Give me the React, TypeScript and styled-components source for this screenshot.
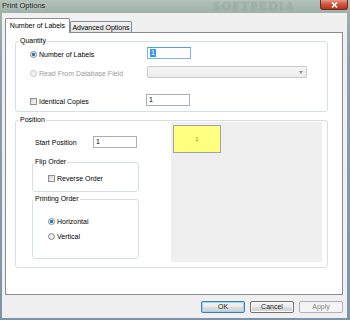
import React from "react"
import styled, { createGlobalStyle } from "styled-components"

const GlobalStyle = createGlobalStyle`
    html, body {
        margin: 0;
        padding: 0;
    }
    body {
        font-family: "Liberation Sans", Arial, sans-serif;
        font-size: 7px;
        color: #000;
    }
    * {
        box-sizing: border-box;
    }
`

export default function App() {
    return (
        <>
            <GlobalStyle />
            <Window>
                <TitleBar>
                    <Title>Print Options</Title>
                    <Watermark>SOFTPEDIA</Watermark>
                    <CloseButton>
                        <svg width="7" height="6" viewBox="0 0 7 6">
                            <path d="M1 0.5 L6 5.5 M6 0.5 L1 5.5" stroke="#fff" strokeWidth="1.6" />
                        </svg>
                    </CloseButton>
                </TitleBar>
                <Client>
                    <TabStrip>
                        <Tab $active $width={65}>Number of Labels</Tab>
                        <Tab $width={62}>Advanced Options</Tab>
                    </TabStrip>
                    <Panel>
                        <Group $width={313}>
                            <Legend>Quantity</Legend>
                            <QuantityBody>
                                <Row $top={2}>
                                    <LabelCell>
                                        <Radio $checked />
                                        <span>Number of Labels</span>
                                    </LabelCell>
                                    <TextBox $focused $width={44}>
                                        <Selected>1</Selected>
                                    </TextBox>
                                </Row>
                                <Row $top={7}>
                                    <LabelCell $disabled>
                                        <Radio $disabled />
                                        <span>Read From Database Field</span>
                                    </LabelCell>
                                    <Select>
                                        <Arrow />
                                    </Select>
                                </Row>
                                <Row $top={16}>
                                    <LabelCell>
                                        <Checkbox />
                                        <span>Identical Copies</span>
                                    </LabelCell>
                                    <TextBox $width={44} $shift={-1}>1</TextBox>
                                </Row>
                            </QuantityBody>
                        </Group>
                        <Group $width={313} $top={4}>
                            <Legend>Position</Legend>
                            <PositionBody>
                                <LeftColumn>
                                    <StartRow>
                                        <StartLabel>Start Position</StartLabel>
                                        <TextBox $width={44}>1</TextBox>
                                    </StartRow>
                                    <Group $width={107} $top={10}>
                                        <SmallLegend>Flip Order</SmallLegend>
                                        <GroupBody $pad="8px 0 8px 15px">
                                            <Option>
                                                <Checkbox />
                                                <span>Reverse Order</span>
                                            </Option>
                                        </GroupBody>
                                    </Group>
                                    <Group $width={107} $top={3}>
                                        <SmallLegend>Printing Order</SmallLegend>
                                        <GroupBody $pad="14px 0 17px 15px">
                                            <Option>
                                                <Radio $checked />
                                                <span>Horizontal</span>
                                            </Option>
                                            <Option $top={6}>
                                                <Radio />
                                                <span>Vertical</span>
                                            </Option>
                                        </GroupBody>
                                    </Group>
                                </LeftColumn>
                                <Preview>
                                    <LabelTile>1</LabelTile>
                                </Preview>
                            </PositionBody>
                        </Group>
                    </Panel>
                    <ButtonBar>
                        <Button $default>OK</Button>
                        <Button>Cancel</Button>
                        <Button disabled>Apply</Button>
                    </ButtonBar>
                </Client>
            </Window>
        </>
    )
}

const Window = styled.div`
    width: 350px;
    height: 320px;
    display: flex;
    flex-direction: column;
    background: linear-gradient(to bottom, #b3c2ba 0, #9eb1a8 13px, #8c9fb0 60px, #7e93aa 100%);
    overflow: hidden;
`

const TitleBar = styled.div`
    height: 13px;
    display: flex;
    align-items: flex-start;
    padding-left: 2px;
`

const Title = styled.div`
    font-size: 7.5px;
    line-height: 9px;
    margin-top: 1px;
    color: #111;
    text-shadow: 0 0 3px rgba(255, 255, 255, 0.7);
`

const Watermark = styled.div`
    margin-left: auto;
    margin-right: 24px;
    font-family: "Liberation Serif", serif;
    font-size: 12px;
    line-height: 13px;
    letter-spacing: 2px;
    color: rgba(190, 210, 205, 0.55);
    text-shadow: 0 0 1px rgba(60, 80, 75, 0.5);
`

const CloseButton = styled.div`
    width: 28px;
    height: 10px;
    margin-right: 2px;
    display: flex;
    align-items: center;
    justify-content: center;
    border: 1px solid #6e2b20;
    border-top: none;
    border-radius: 0 0 3px 3px;
    background: linear-gradient(to bottom, #e49a88 0, #d0563e 45%, #b8331c 100%);
`

const Client = styled.div`
    flex: 1;
    margin: 0 3px 2px 2px;
    background: #f0f0f0;
    padding: 5px 4px 5px 3px;
    display: flex;
    flex-direction: column;
`

const TabStrip = styled.div`
    height: 14px;
    display: flex;
    align-items: flex-end;
`

const Tab = styled.div<{ $active?: boolean; $width: number }>`
    position: relative;
    z-index: ${p => (p.$active ? 1 : 0)};
    width: ${p => p.$width}px;
    height: ${p => (p.$active ? 15 : 11)}px;
    margin-bottom: ${p => (p.$active ? -1 : 0)}px;
    display: flex;
    align-items: center;
    justify-content: center;
    border: 1px solid #898c95;
    border-bottom: none;
    border-radius: 2px 2px 0 0;
    background: ${p => (p.$active ? "#fff" : "linear-gradient(to bottom, #f3f3f3, #e2e2e2)")};
    padding-bottom: ${p => (p.$active ? 1 : 0)}px;
    white-space: nowrap;
`

const Panel = styled.div`
    height: 263px;
    border: 1px solid #898c95;
    background: #fff;
    padding: 4px 0 0 9px;
`

const Group = styled.fieldset<{ $width: number; $top?: number }>`
    width: ${p => p.$width}px;
    margin: ${p => p.$top ?? 0}px 0 0 0;
    padding: 0;
    border: 1px solid #d5dfe5;
    border-radius: 3px;
    min-width: 0;
`

const Legend = styled.legend`
    font-size: 7px;
    line-height: 8px;
    padding: 0 1px;
    margin-left: 3px;
`

const SmallLegend = styled(Legend)`
    margin-left: 1px;
`

const QuantityBody = styled.div`
    padding: 0 0 5px 14px;
`

const Row = styled.div<{ $top: number }>`
    display: flex;
    align-items: center;
    height: 12px;
    margin-top: ${p => p.$top}px;
`

const LabelCell = styled.div<{ $disabled?: boolean }>`
    width: 117px;
    display: flex;
    align-items: center;
    gap: 2px;
    margin-top: 2px;
    color: ${p => (p.$disabled ? "#9b9b9b" : "inherit")};
    white-space: nowrap;
`

const Radio = styled.span<{ $checked?: boolean; $disabled?: boolean }>`
    width: 7px;
    height: 7px;
    flex: none;
    border-radius: 50%;
    border: 1px solid ${p => (p.$disabled ? "#c4c4c4" : "#8a8d90")};
    background: ${p =>
        p.$checked
            ? "radial-gradient(circle, #1f5f9c 0, #3a86c8 1.4px, #e6edf3 1.9px, #d3d9df 100%)"
            : p.$disabled
                ? "#f2f2f2"
                : "radial-gradient(circle, #f6f6f6 0, #d9dcde 100%)"};
`

const Checkbox = styled.span`
    width: 7px;
    height: 7px;
    flex: none;
    border: 1px solid #8f8f8f;
    background: linear-gradient(135deg, #d6d6d6 0, #f9f9f9 100%);
`

const TextBox = styled.div<{ $width: number; $focused?: boolean; $shift?: number }>`
    width: ${p => p.$width}px;
    height: 12px;
    margin-left: ${p => p.$shift ?? 0}px;
    border: 1px solid ${p => (p.$focused ? "#7eb4ea" : "#abadb3")};
    border-top-color: ${p => (p.$focused ? "#569de5" : "#abadb3")};
    background: #fff;
    display: flex;
    align-items: center;
    padding-left: 2px;
    line-height: 8px;
`

const Selected = styled.span`
    background: #3399ff;
    color: #fff;
    padding: 0 1px;
`

const Select = styled.div`
    width: 160px;
    height: 12px;
    border: 1px solid #c9c9c9;
    border-radius: 2px;
    background: linear-gradient(to bottom, #f5f5f5, #ececec);
    display: flex;
    align-items: center;
    justify-content: flex-end;
    padding-right: 3px;
`

const Arrow = styled.span`
    width: 0;
    height: 0;
    border-left: 2.5px solid transparent;
    border-right: 2.5px solid transparent;
    border-top: 3px solid #8e8e8e;
`

const PositionBody = styled.div`
    display: flex;
    margin-top: -2px;
    padding: 0 5px 5px 16px;
`

const LeftColumn = styled.div`
    width: 107px;
    flex: none;
    padding-top: 14px;
`

const StartRow = styled.div`
    display: flex;
    align-items: center;
    height: 12px;
    padding-left: 3px;
`

const StartLabel = styled.span`
    width: 58px;
`

const GroupBody = styled.div<{ $pad: string }>`
    padding: ${p => p.$pad};
`

const Option = styled.div<{ $top?: number }>`
    display: flex;
    align-items: center;
    gap: 2px;
    height: 9px;
    margin-top: ${p => p.$top ?? 0}px;
`

const Preview = styled.div`
    width: 151px;
    height: 140px;
    margin-left: 32px;
    background: #efefef;
    padding: 3px 0 0 2px;
`

const LabelTile = styled.div`
    width: 48px;
    height: 28px;
    background: #ffff80;
    border: 1px solid #a3a3a3;
    display: flex;
    align-items: center;
    justify-content: center;
    font-size: 5px;
    color: #8a6a00;
`

const ButtonBar = styled.div`
    display: flex;
    justify-content: flex-end;
    gap: 5px;
    margin-top: 6px;
`

const Button = styled.button<{ $default?: boolean }>`
    width: 44px;
    height: 12px;
    padding: 0;
    font-family: inherit;
    font-size: 7px;
    line-height: 8px;
    color: #1e1e1e;
    border: 1px solid ${p => (p.$default ? "#3c7fb1" : "#707070")};
    border-radius: 2px;
    background: linear-gradient(to bottom, #f2f2f2 0, #ebebeb 50%, #dddddd 51%, #cfcfcf 100%);
    box-shadow: ${p => (p.$default ? "inset 0 0 0 1px #9fd3f2" : "inset 0 0 0 1px #fcfcfc")};

    &:disabled {
        border-color: #adb2b5;
        background: #f4f4f4;
        color: #838383;
        box-shadow: none;
    }
`
